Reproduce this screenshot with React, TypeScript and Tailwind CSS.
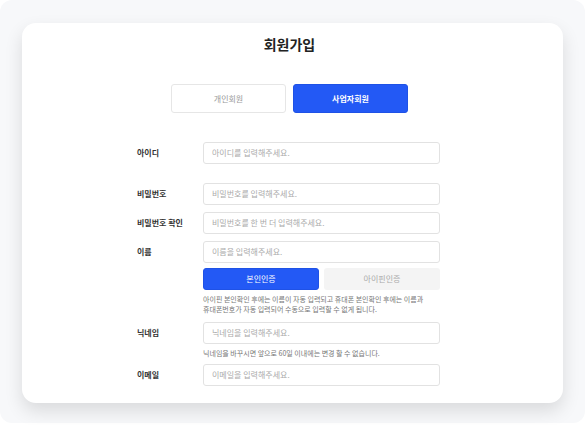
import React from "react";

const font = { fontFamily: '"Noto Sans CJK KR", "Noto Sans", sans-serif' };

function Field({ label, placeholder }: { label: string; placeholder: string }) {
  return (
    <div className="flex items-center">
      <div className="w-[66px] text-[8px] font-bold text-[#333]">{label}</div>
      <div className="w-[237px] h-[22px] flex items-center px-[8px] border border-[#e2e2e2] rounded-[3px] bg-white text-[8px] text-[#aaa]">
        {placeholder}
      </div>
    </div>
  );
}

export default function App() {
  return (
    <div className="w-[585px] h-[425px] bg-white" style={font}>
      <div className="h-[423px] rounded-[12px] bg-[#f7f8fa] pt-[23px] px-[22px]">
        <div className="h-[380px] bg-white rounded-[14px] shadow-[0_8px_18px_rgba(0,0,0,0.12)] pt-[11px]">
          <h1 className="text-center text-[14px] font-bold text-[#222] leading-[20px] ml-[-6px]">회원가입</h1>

          <div className="flex gap-[7px] ml-[149px] mt-[30px]">
            <button type="button" className="w-[115px] h-[29px] rounded-[3px] border border-[#e6e6e6] bg-white text-[8px] text-[#999]">
              개인회원
            </button>
            <button type="button" className="w-[115px] h-[29px] rounded-[3px] border border-[#1f52e6] bg-[#2359f5] text-[8px] font-bold text-white">
              사업자회원
            </button>
          </div>

          <div className="ml-[115px] w-[303px] mt-[29px] flex flex-col">
            <Field label="아이디" placeholder="아이디를 입력해주세요." />
            <div className="mt-[19px] flex flex-col gap-[7px]">
              <Field label="비밀번호" placeholder="비밀번호를 입력해주세요." />
              <Field label="비밀번호 확인" placeholder="비밀번호를 한 번 더 입력해주세요." />
              <Field label="이름" placeholder="이름을 입력해주세요." />
            </div>
            <div className="ml-[66px] w-[237px] mt-[5px]">
              <div className="flex gap-[5px]">
                <button type="button" className="w-[116px] h-[22px] rounded-[3px] border border-[#1f52e6] bg-[#2359f5] text-[8px] text-white">
                  본인인증
                </button>
                <button type="button" className="w-[116px] h-[22px] rounded-[3px] bg-[#f4f4f4] text-[8px] text-[#aaa]">
                  아이핀인증
                </button>
              </div>
              <p className="mt-[4px] text-[7px] leading-[10px] text-[#777] whitespace-nowrap">
                아이핀 본인확인 후에는 이름이 자동 입력되고 휴대폰 본인확인 후에는 이름과
                <br />
                휴대폰번호가 자동 입력되어 수동으로 입력할 수 없게 됩니다.
              </p>
            </div>
            <div className="mt-[8px]">
              <Field label="닉네임" placeholder="닉네임을 입력해주세요." />
            </div>
            <p className="ml-[66px] mt-[4px] text-[7px] leading-[10px] text-[#777] whitespace-nowrap">
              닉네임을 바꾸시면 앞으로 60일 이내에는 변경 할 수 없습니다.
            </p>
            <div className="mt-[6px]">
              <Field label="이메일" placeholder="이메일을 입력해주세요." />
            </div>
          </div>
        </div>
      </div>
    </div>
  );
}
